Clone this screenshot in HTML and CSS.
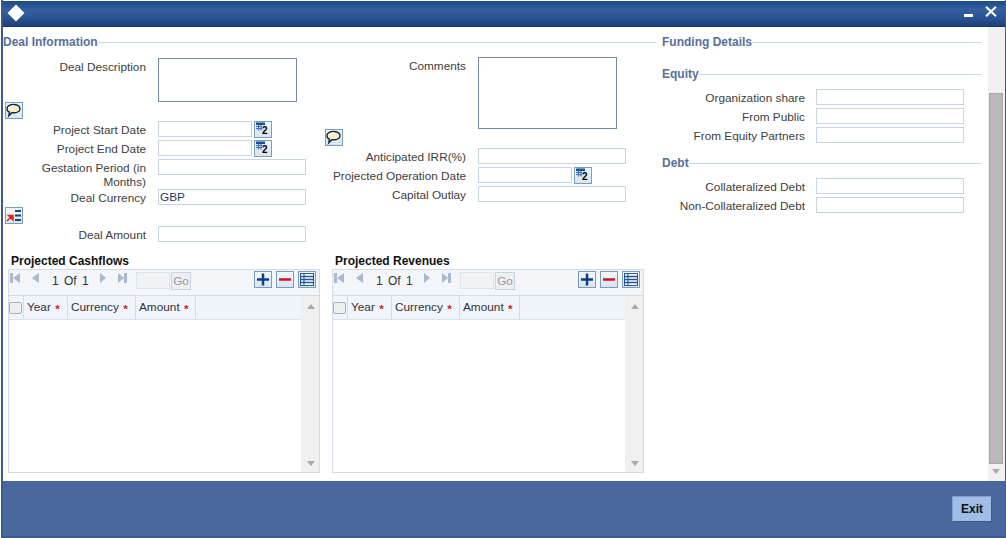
FILE: index.html
```html
<!DOCTYPE html>
<html lang="en">
<head>
<meta charset="utf-8">
<title>Deal Information</title>
<link rel="stylesheet" href="styles.css">
</head>
<body>
<svg class="defs" width="0" height="0" aria-hidden="true">
  <symbol id="i-bubble" viewBox="0 0 16 15">
    <path d="M7.500 1.500c3.600 0 6.500 1.700 6.500 4.200s-2.900 4.100-6.500 4.100H6l-3.200 3 .7-3.700C2 8.600 1 7.300 1 5.700 1 3.200 3.900 1.500 7.500 1.500z" fill="#fdf0c4" stroke="#0a2747" stroke-width="1.400"/>
    <path d="M3 5c.6-1.500 2.500-2.200 5-2.200" fill="none" stroke="#fff" stroke-width="1.200"/>
  </symbol>
  <symbol id="i-cal" viewBox="0 0 16 15">
    <rect x="1" y="0.500" width="9" height="8" fill="#cfe0f4"/>
    <rect x="1" y="0.500" width="9" height="2.500" fill="#1c4f94"/>
    <path d="M1 4.500h6M1 6.500h6M3.500 3v5.500M6 3v5.500" stroke="#3d74b8" stroke-width="1"/>
  </symbol>
  <symbol id="i-pick" viewBox="0 0 16 15">
    <path d="M1 13l4.500-4.500M2.500 7.500H7V12z" fill="#d8290f" stroke="#d8290f" stroke-width="1.500"/>
    <path d="M9 3h6M9 7.500h6M9 12h6" stroke="#14477f" stroke-width="2"/>
  </symbol>
  <symbol id="i-plus" viewBox="0 0 16 15">
    <path d="M8 1.500v12M2 7.500h12" stroke="#0e3f87" stroke-width="2.500"/>
  </symbol>
  <symbol id="i-minus" viewBox="0 0 16 15">
    <path d="M2 7.500h12" stroke="#cf1322" stroke-width="2.500"/>
  </symbol>
  <symbol id="i-list" viewBox="0 0 16 15">
    <rect x="1.500" y="1.500" width="13" height="12" fill="#fff" stroke="#24568f"/>
    <path d="M2 4.500h12M2 7.500h12M2 10.500h12" stroke="#24568f" stroke-width="1.300"/>
    <path d="M5 2v11" stroke="#24568f"/>
  </symbol>
</svg>

<div class="window">
  <header class="titlebar">
    <span class="diamond"></span>
    <span class="spacer"></span>
    <span class="minimize"></span>
    <svg class="close" width="12" height="11" viewBox="0 0 12 11"><path d="M1 .8l10 9.400M11 .8L1 10.200" stroke="#fff" stroke-width="2"/></svg>
  </header>

  <div class="body">
    <main class="content">
      <div class="upper">
        <section class="deal">
          <h2 class="legend legend-deal"><span>Deal Information</span></h2>
          <div class="deal-cols">
            <div class="col col-left">
              <div class="row row-area"><label class="lbl">Deal Description</label><div class="textarea ta-s"></div></div>
              <button class="ib ib-block"><svg><use href="#i-bubble"/></svg></button>
              <div class="row"><label class="lbl">Project Start Date</label><div class="input date"></div><button class="ib ib-cal"><svg><use href="#i-cal"/></svg><span class="cal-num">2</span></button></div>
              <div class="row"><label class="lbl">Project End Date</label><div class="input date"></div><button class="ib ib-cal"><svg><use href="#i-cal"/></svg><span class="cal-num">2</span></button></div>
              <div class="row row-tall"><label class="lbl">Gestation Period (in Months)</label><div class="input"></div></div>
              <div class="row row-tight"><label class="lbl">Deal Currency</label><div class="input">GBP</div></div>
              <button class="ib ib-block"><svg><use href="#i-pick"/></svg></button>
              <div class="row"><label class="lbl">Deal Amount</label><div class="input"></div></div>
            </div>
            <div class="col col-mid">
              <div class="row row-area"><label class="lbl">Comments</label><div class="textarea ta-l"></div></div>
              <button class="ib ib-block"><svg><use href="#i-bubble"/></svg></button>
              <div class="row"><label class="lbl">Anticipated IRR(%)</label><div class="input"></div></div>
              <div class="row"><label class="lbl">Projected Operation Date</label><div class="input date"></div><button class="ib ib-cal"><svg><use href="#i-cal"/></svg><span class="cal-num">2</span></button></div>
              <div class="row"><label class="lbl">Capital Outlay</label><div class="input"></div></div>
            </div>
          </div>
        </section>

        <section class="funding">
          <h2 class="legend"><span>Funding Details</span></h2>
          <h3 class="legend legend-equity"><span>Equity</span></h3>
          <div class="row frow"><label class="lbl">Organization share</label><div class="input"></div></div>
          <div class="row frow"><label class="lbl">From Public</label><div class="input"></div></div>
          <div class="row frow"><label class="lbl">From Equity Partners</label><div class="input"></div></div>
          <h3 class="legend legend-debt"><span>Debt</span></h3>
          <div class="row frow"><label class="lbl">Collateralized Debt</label><div class="input"></div></div>
          <div class="row frow"><label class="lbl">Non-Collateralized Debt</label><div class="input"></div></div>
        </section>
      </div>

      <div class="grids">
        <section class="grid">
          <h4 class="grid-title">Projected Cashflows</h4>
          <div class="grid-box">
            <div class="toolbar">
              <span class="nav first"></span><span class="nav prev"></span>
              <span class="pager">1 Of 1</span>
              <span class="nav next"></span><span class="nav last"></span>
              <span class="page-input"></span><span class="go">Go</span>
              <span class="spacer"></span>
              <button class="ib tb"><svg><use href="#i-plus"/></svg></button>
              <button class="ib tb"><svg><use href="#i-minus"/></svg></button>
              <button class="ib tb"><svg><use href="#i-list"/></svg></button>
            </div>
            <div class="table">
              <div class="table-main">
                <div class="thead">
                  <div class="th th-check"><span class="check"></span></div>
                  <div class="th th-year">Year <i class="req">*</i></div>
                  <div class="th th-cur">Currency <i class="req">*</i></div>
                  <div class="th th-amt">Amount <i class="req">*</i></div>
                  <div class="th th-fill"></div>
                </div>
              </div>
              <div class="vscroll"><span class="arr up"></span><span class="arr down"></span></div>
            </div>
          </div>
        </section>

        <section class="grid">
          <h4 class="grid-title">Projected Revenues</h4>
          <div class="grid-box">
            <div class="toolbar">
              <span class="nav first"></span><span class="nav prev"></span>
              <span class="pager">1 Of 1</span>
              <span class="nav next"></span><span class="nav last"></span>
              <span class="page-input"></span><span class="go">Go</span>
              <span class="spacer"></span>
              <button class="ib tb"><svg><use href="#i-plus"/></svg></button>
              <button class="ib tb"><svg><use href="#i-minus"/></svg></button>
              <button class="ib tb"><svg><use href="#i-list"/></svg></button>
            </div>
            <div class="table">
              <div class="table-main">
                <div class="thead">
                  <div class="th th-check"><span class="check"></span></div>
                  <div class="th th-year">Year <i class="req">*</i></div>
                  <div class="th th-cur">Currency <i class="req">*</i></div>
                  <div class="th th-amt">Amount <i class="req">*</i></div>
                  <div class="th th-fill"></div>
                </div>
              </div>
              <div class="vscroll"><span class="arr up"></span><span class="arr down"></span></div>
            </div>
          </div>
        </section>
      </div>
    </main>

    <aside class="page-scroll"><div class="page-thumb"></div><span class="arr down"></span></aside>
  </div>

  <footer class="footer"><button class="exit">Exit</button></footer>
</div>
</body>
</html>
```

FILE: styles.css
```css
* { box-sizing: border-box; }
html, body { margin: 0; height: 100%; background: #fff; overflow: hidden; }
body { font-family: "Liberation Sans", Arial, sans-serif; font-size: 11.8px; color: #333; }
.defs { display: block; height: 0; }
.spacer { flex: 1; }

.window { width: 1005px; height: 538px; margin-left: 1px; display: flex; flex-direction: column; border-left: 2px solid #3c5a8c; border-right: 1px solid #3c5a8c; border-bottom: 2px solid #3c5a8c; padding-top: 1px; }

.titlebar { height: 26px; flex: none; display: flex; align-items: center; padding: 0 8px 0 7px; background: linear-gradient(#1f4a8a 0, #34609f 35%, #2a5290 70%, #1d4079 100%); border-bottom: 1px solid #17335f; }
.diamond { width: 12px; height: 12px; margin-top: -1px; background: #fff; transform: rotate(45deg); }
.minimize { width: 9px; height: 3px; background: #fff; margin: 4px 12px 0 0; }
.close { display: block; margin-top: -4px; }

.body { flex: 1; min-height: 0; display: flex; }
.content { width: 985px; flex: none; }

.upper { display: flex; height: 227px; }
.deal { width: 653px; flex: none; }
.funding { width: 319px; margin-left: 6px; }

.legend { display: flex; align-items: center; margin: 0; font-size: 12px; font-weight: bold; color: #566f9b; line-height: 14px; }
.legend::after { content: ""; flex: 1; height: 1px; background: #cbd6e6; }
.deal > .legend, .funding > .legend:first-child { margin-top: 8px; }
.legend-equity { margin-top: 18px; margin-bottom: 8px; }
.legend-debt { margin-top: 13px; margin-bottom: 8px; }

.deal-cols { display: flex; }
.col { flex: none; }
.col-left { width: 322px; padding-top: 9px; }
.col-mid { width: 326px; padding-top: 8px; }

.row { display: flex; align-items: flex-start; height: 16px; margin-bottom: 3px; }
.lbl { flex: none; text-align: right; line-height: 14px; padding-top: 2px; color: #404040; }
.col-left .lbl { width: 143px; margin-right: 12px; }
.col-mid .lbl { width: 141px; margin-right: 12px; }
.input { width: 148px; height: 16px; border: 1px solid #c6d5e6; background: #fff; line-height: 14px; padding-left: 1px; color: #1a3c66; flex: none; }
.input.date { width: 94px; }
.textarea { border: 1px solid #6f8aa5; background: #fff; flex: none; width: 139px; }
.ta-s { height: 44px; }
.ta-l { height: 72px; }
.row-area { height: auto; margin-bottom: 0; }
.row-tall { height: 30px; margin-bottom: 0; }
.row-tight { margin-bottom: 2px; }

.ib { width: 18px; height: 17px; padding: 0; flex: none; border: 1px solid #7d9cbc; background: linear-gradient(#f4f8fc, #d8e4f1); display: block; }
.ib svg { display: block; width: 16px; height: 15px; }
.ib-cal { position: relative; }
.cal-num { position: absolute; left: 7px; top: 3px; font: bold 10px/12px "Liberation Sans", Arial, sans-serif; color: #000; }
.row .ib { margin-left: 2px; }
.ib-block { margin-left: 2px; margin-bottom: 2px; }
.col-mid .ib-block { margin-left: 0; }

.frow .lbl { width: 143px; margin-right: 11px; }

.grids { display: flex; gap: 12px; padding-left: 5px; }
.grid { width: 312px; flex: none; }
.grid-title { margin: 0 0 0 3px; font-size: 12px; line-height: 15px; color: #111; font-weight: bold; }
.grid-box { height: 204px; border: 1px solid #d3dbe6; display: flex; flex-direction: column; }

.toolbar { height: 26px; flex: none; background: #f3f5f8; border-bottom: 1px solid #d3dbe6; display: flex; align-items: center; padding: 0 3px 4px 1px; }
.nav { width: 0; height: 0; border-style: solid; flex: none; display: block; position: relative; margin-top: -6px; }
.nav.first, .nav.prev { border-width: 5px 7px 5px 0; border-color: transparent #aab9cf transparent transparent; }
.nav.next, .nav.last { border-width: 5px 0 5px 6px; border-color: transparent transparent transparent #aab9cf; }
.nav.first { margin-left: 3px; }
.nav.first::before { content: ""; position: absolute; left: -3px; top: -5px; width: 3px; height: 10px; background: #aab9cf; }
.nav.last::after { content: ""; position: absolute; left: 0; top: -5px; width: 3px; height: 10px; background: #aab9cf; }
.nav.prev { margin-left: 12px; }
.nav.next { margin-left: 12px; }
.nav.last { margin-left: 12px; }
.pager { width: 36px; margin-left: 13px; color: #333; font-size: 12px; word-spacing: 2px; white-space: nowrap; }
.page-input { width: 34px; height: 17px; margin-left: 12px; background: #f0f2f5; border: 1px solid #dfe4ea; flex: none; }
.go { width: 20px; height: 18px; margin-left: 1px; border: 1px solid #ccd2da; background: #edf0f3; color: #999; text-align: center; line-height: 16px; flex: none; }
.tb { margin-left: 4px; margin-top: -2px; }

.table { flex: 1; display: flex; min-height: 0; }
.table-main { flex: 1; }
.thead { height: 24px; display: flex; background: #f0f4fb; border-bottom: 1px solid #d9e2ef; }
.th { border-right: 1px solid #d0dbeb; line-height: 23px; white-space: nowrap; padding-left: 3px; color: #333; }
.th-check { width: 15px; padding: 6px 0 0 0; }
.th-year { width: 44px; }
.th-cur { width: 68px; }
.th-amt { width: 60px; }
.th-fill { flex: 1; border-right: 0; }
.check { display: block; width: 13px; height: 12px; border: 1px solid #a9b1bb; border-radius: 2px; background: #eceef0; }
.req { color: #d71920; font-style: normal; font-weight: bold; position: relative; top: 2px; margin-left: 1px; }

.vscroll { width: 18px; flex: none; background: #f0f0f0; border-left: 1px solid #eee; display: flex; flex-direction: column; justify-content: space-between; align-items: center; padding: 8px 0 6px; }
.arr { width: 0; height: 0; border-style: solid; display: block; }
.arr.up { border-width: 0 4px 5px; border-color: transparent transparent #aaa; }
.arr.down { border-width: 5px 4px 0; border-color: #aaa transparent transparent; }

.page-scroll { width: 17px; flex: none; background: #f0f0f0; display: flex; flex-direction: column; justify-content: flex-end; align-items: center; padding: 66px 2px 7px 1px; }
.page-thumb { flex: 1; width: 14px; background: #b9b9b9; border: 1px solid #a6a6a6; margin-bottom: 5px; }

.footer { height: 55px; flex: none; background: #48689e; display: flex; align-items: center; justify-content: flex-end; padding: 1px 13px 0 0; }
.exit { width: 40px; height: 26px; padding: 0; border: 1px solid #3f5a85; border-top-color: #7f9fcc; border-left-color: #7f9fcc; background: #9fbde6; color: #111; font: bold 12px "Liberation Sans", Arial, sans-serif; }
```
